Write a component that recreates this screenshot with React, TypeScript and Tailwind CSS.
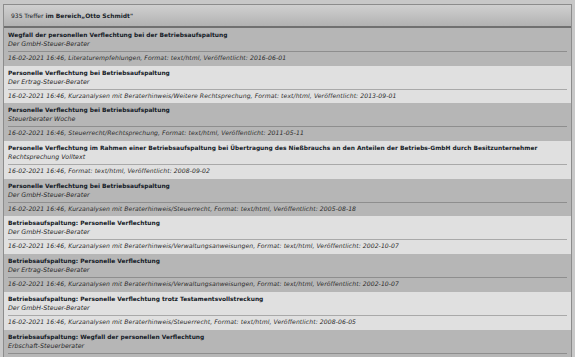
import React from "react";

type Hit = { title: string; source: string; meta: string };

const hits: Hit[] = [
  {
    title: "Wegfall der personellen Verflechtung bei der Betriebsaufspaltung",
    source: "Der GmbH-Steuer-Berater",
    meta: "16-02-2021 16:46, Literaturempfehlungen, Format: text/html, Veröffentlicht: 2016-06-01",
  },
  {
    title: "Personelle Verflechtung bei Betriebsaufspaltung",
    source: "Der Ertrag-Steuer-Berater",
    meta: "16-02-2021 16:46, Kurzanalysen mit Beraterhinweis/Weitere Rechtsprechung, Format: text/html, Veröffentlicht: 2013-09-01",
  },
  {
    title: "Personelle Verflechtung bei Betriebsaufspaltung",
    source: "Steuerberater Woche",
    meta: "16-02-2021 16:46, Steuerrecht/Rechtsprechung, Format: text/html, Veröffentlicht: 2011-05-11",
  },
  {
    title:
      "Personelle Verflechtung im Rahmen einer Betriebsaufspaltung bei Übertragung des Nießbrauchs an den Anteilen der Betriebs-GmbH durch Besitzunternehmer",
    source: "Rechtsprechung Volltext",
    meta: "16-02-2021 16:46, Format: text/html, Veröffentlicht: 2008-09-02",
  },
  {
    title: "Personelle Verflechtung bei Betriebsaufspaltung",
    source: "Der GmbH-Steuer-Berater",
    meta: "16-02-2021 16:46, Kurzanalysen mit Beraterhinweis/Steuerrecht, Format: text/html, Veröffentlicht: 2005-08-18",
  },
  {
    title: "Betriebsaufspaltung: Personelle Verflechtung",
    source: "Der GmbH-Steuer-Berater",
    meta: "16-02-2021 16:46, Kurzanalysen mit Beraterhinweis/Verwaltungsanweisungen, Format: text/html, Veröffentlicht: 2002-10-07",
  },
  {
    title: "Betriebsaufspaltung: Personelle Verflechtung",
    source: "Der Ertrag-Steuer-Berater",
    meta: "16-02-2021 16:46, Kurzanalysen mit Beraterhinweis/Verwaltungsanweisungen, Format: text/html, Veröffentlicht: 2002-10-07",
  },
  {
    title: "Betriebsaufspaltung: Personelle Verflechtung trotz Testamentsvollstreckung",
    source: "Der GmbH-Steuer-Berater",
    meta: "16-02-2021 16:46, Kurzanalysen mit Beraterhinweis/Steuerrecht, Format: text/html, Veröffentlicht: 2008-06-05",
  },
  {
    title: "Betriebsaufspaltung: Wegfall der personellen Verflechtung",
    source: "Erbschaft-Steuerberater",
    meta: "16-02-2021 16:46, Kurzanalysen mit Beraterhinweis/Steuerrecht, Format: text/html, Veröffentlicht: 2008-06-05",
  },
];

function HitRow({ hit, dark }: { hit: Hit; dark: boolean }) {
  return (
    <div className={`h-[37.7px] shrink-0 px-[4px] pt-[2px] ${dark ? "bg-[#b6b6b6]" : "bg-[#e0e0e0]"}`}>
      <p className="whitespace-nowrap text-[5.9px] font-bold leading-[10px] text-[#141a26]">{hit.title}</p>
      <p className="whitespace-nowrap text-[6.3px] italic leading-[8px] text-[#2a2a2a]">{hit.source}</p>
      <div className={`mt-[3px] h-px ${dark ? "bg-[#8e8e8e]" : "bg-[#a9a9a9]"}`} />
      <p className="whitespace-nowrap text-[6.1px] italic leading-[11px] tracking-[0.08px] text-[#2a2a2a]">{hit.meta}</p>
    </div>
  );
}

export default function App() {
  return (
    <div
      className="flex h-[357px] w-[575px] flex-col overflow-hidden bg-[#c8c8c8] px-[3px] pt-[4px]"
      style={{ fontFamily: '"DejaVu Sans", Verdana, sans-serif' }}
    >
      <div className="flex min-h-0 flex-1 flex-col overflow-hidden border-x border-t border-[#8c8c8c]">
        {/* header */}
        <div className="flex h-[23px] shrink-0 items-center border-b-2 border-[#707070] bg-gradient-to-b from-[#d0d0d0] to-[#b2b2b2] pl-[7px]">
          <p className="whitespace-nowrap text-[6px] text-[#1a1f2a]">
            935 Treffer <span className="font-bold">im Bereich„Otto Schmidt"</span>
          </p>
        </div>

        {/* results */}
        <div className="flex flex-col">
          {hits.map((h, i) => (
            <HitRow key={i} hit={h} dark={i % 2 === 0} />
          ))}
        </div>
      </div>
    </div>
  );
}
